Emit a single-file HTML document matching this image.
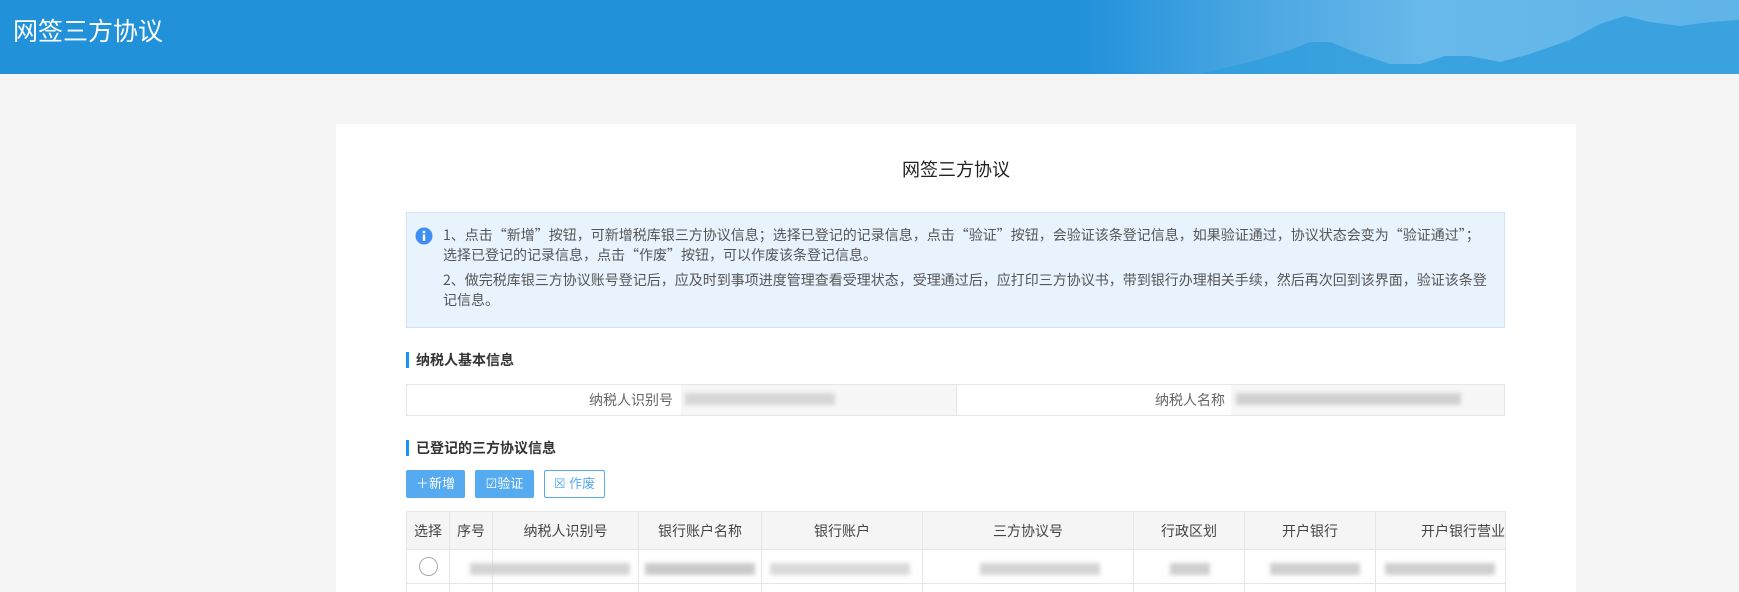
<!DOCTYPE html>
<html style="width:1739px;height:592px;overflow:hidden"><head><meta charset="utf-8">
<style>
*{margin:0;padding:0;box-sizing:border-box}
body{width:1739px;height:592px;overflow:hidden;background:#f5f5f5;font-family:"Liberation Sans","Noto Sans CJK SC",sans-serif;color:#333;position:relative}
.hdr{position:absolute;left:0;top:0;width:1739px;height:74px;background:linear-gradient(90deg,#2191d9 0%,#2191d9 62%,#4aa6e2 72%,#68b9ea 82%,#5fb4e8 100%);overflow:hidden}
.hdr h1{position:absolute;left:13px;top:16px;font-size:25px;font-weight:normal;color:#fff;line-height:32px}
.card{position:absolute;left:336px;top:124px;width:1240px;height:468px;background:#fff}
.ab{position:absolute}
.title{left:0;width:1240px;top:158px;text-align:center;font-size:18px;color:#222;line-height:24px}
.info{left:406px;top:212px;width:1099px;height:116px;background:#e8f3fe;border:1px solid #cfe3f6}
.info p{position:absolute;left:36px;font-size:14px;line-height:20px;color:#555;width:1050px;font-family:"Noto Sans CJK SC",sans-serif;white-space:nowrap}
.sec{font-size:14px;font-weight:bold;color:#333;border-left:3px solid #1890ff;padding-left:7px;line-height:16px}
.btn{height:28px;font-size:13px;line-height:28px;text-align:center;color:#fff;background:#56aaf0;border-radius:2px}
.blur{position:absolute;background:#c8c8c8;filter:blur(2px)}
td,th{border:1px solid #e6e6e6;font-weight:normal;font-size:14px;color:#444;text-align:center}
.clip{position:absolute;left:0;top:0;width:1739px;height:592px;overflow:hidden}
</style></head><body><div class="clip">
<div class="hdr"><h1>网签三方协议</h1>
<svg class="ab" style="left:1000px;top:0" width="739" height="74" viewBox="0 0 739 74">
<path d="M200 74 L250 62 L290 50 L310 42 L330 42 L360 54 L390 64 L420 64 L445 56 L470 56 L500 62 L530 54 L570 40 L600 24 L625 16 L650 22 L680 26 L710 22 L739 20 L739 74 Z" fill="#2f9ddc" opacity="0.8"/>
</svg></div>
<div class="card"></div>
<div class="ab title" style="left:336px">网签三方协议</div>
<div class="ab info">
<svg class="ab" style="left:8px;top:14px" width="18" height="18" viewBox="0 0 18 18"><circle cx="9" cy="9" r="8.5" fill="#3d8ef0"/><rect x="7.8" y="7.5" width="2.4" height="6.5" fill="#fff"/><circle cx="9" cy="5" r="1.4" fill="#fff"/></svg>
<p style="top:12px">1、点击“新增”按钮，可新增税库银三方协议信息；选择已登记的记录信息，点击“验证”按钮，会验证该条登记信息，如果验证通过，协议状态会变为“验证通过”；<br>选择已登记的记录信息，点击“作废”按钮，可以作废该条登记信息。</p>
<p style="top:57px">2、做完税库银三方协议账号登记后，应及时到事项进度管理查看受理状态，受理通过后，应打印三方协议书，带到银行办理相关手续，然后再次回到该界面，验证该条登<br>记信息。</p>
</div>
<div class="ab sec" style="left:406px;top:352px">纳税人基本信息</div>
<div class="ab" style="left:406px;top:384px;width:1099px;height:32px;border:1px solid #e6e6e6;background:#fff"></div>
<div class="ab" style="left:681px;top:385px;width:275px;height:30px;background:#f7f7f7"></div>
<div class="ab" style="left:956px;top:384px;width:1px;height:32px;background:#e6e6e6"></div>
<div class="ab" style="left:1231px;top:385px;width:273px;height:30px;background:#f7f7f7"></div>
<div class="ab" style="left:560px;top:390px;width:113px;text-align:right;font-size:14px;line-height:20px;color:#666">纳税人识别号</div>
<div class="ab" style="left:1100px;top:390px;width:125px;text-align:right;font-size:14px;line-height:20px;color:#666">纳税人名称</div>
<div class="blur" style="left:685px;top:393px;width:150px;height:12px;background:#d6d6d6"></div>
<div class="blur" style="left:1236px;top:393px;width:225px;height:12px;background:#d0d0d0"></div>
<div class="ab sec" style="left:406px;top:440px">已登记的三方协议信息</div>
<div class="ab btn" style="left:406px;top:470px;width:59px">＋新增</div>
<div class="ab btn" style="left:475px;top:470px;width:59px">☑验证</div>
<div class="ab btn" style="left:544px;top:470px;width:61px;background:#fff;border:1px solid #56aaf0;color:#56aaf0;line-height:26px">☒ 作废</div>
<table class="ab" style="left:406px;top:511px;width:1099px;border-collapse:collapse;table-layout:fixed;background:#fff">
<colgroup><col style="width:43px"><col style="width:43px"><col style="width:146px"><col style="width:123px"><col style="width:161px"><col style="width:211px"><col style="width:111px"><col style="width:131px"><col style="width:130px"></colgroup>
<tr style="height:38px;background:#f5f5f5"><th>选择</th><th>序号</th><th>纳税人识别号</th><th>银行账户名称</th><th>银行账户</th><th>三方协议号</th><th>行政区划</th><th>开户银行</th><th style="text-align:right;white-space:nowrap;overflow:hidden">开户银行营业</th></tr>
<tr style="height:34px"><td><span style="display:inline-block;width:19px;height:19px;border:1px solid #aaa;border-radius:50%;vertical-align:middle"></span></td><td></td><td></td><td></td><td></td><td></td><td></td><td></td><td></td></tr>
<tr style="height:34px"><td></td><td></td><td></td><td></td><td></td><td></td><td></td><td></td><td></td></tr>
</table>
<div class="blur" style="left:470px;top:563px;width:160px;height:12px;background:#d4d4d4"></div>
<div class="blur" style="left:645px;top:563px;width:110px;height:12px;background:#cacaca"></div>
<div class="blur" style="left:770px;top:563px;width:140px;height:12px;background:#dadada"></div>
<div class="blur" style="left:980px;top:563px;width:120px;height:12px;background:#d4d4d4"></div>
<div class="blur" style="left:1170px;top:563px;width:40px;height:12px;background:#cfcfcf"></div>
<div class="blur" style="left:1270px;top:563px;width:90px;height:12px;background:#cfcfcf"></div>
<div class="blur" style="left:1385px;top:563px;width:110px;height:12px;background:#cfcfcf"></div>
</div></body></html>
